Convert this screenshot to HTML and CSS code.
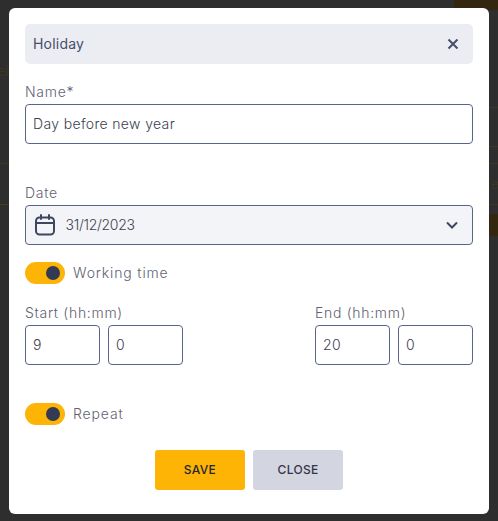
FILE: index.html
```html
<!DOCTYPE html>
<html lang="en">
<head>
<meta charset="utf-8">
<title>Holiday</title>
<link rel="stylesheet" href="styles.css">
</head>
<body>
<div class="backdrop" aria-hidden="true">
  <span class="bg-block bg-block-top"></span>
  <span class="bg-block bg-block-right"></span>
  <span class="bg-line bg-line-r1"></span>
  <span class="bg-line bg-line-r2"></span>
  <span class="bg-line bg-line-r3"></span>
  <span class="bg-line bg-line-r4"></span>
  <span class="bg-line bg-line-l1"></span>
  <span class="bg-line bg-line-l2"></span>
  <span class="bg-text bg-text-l">ek</span>
  <span class="bg-text bg-text-r">e</span>
</div>
<main class="modal">
  <header class="modal-head">
    <span>Holiday</span>
    <svg class="icon-close" width="12" height="12" viewBox="0 0 12 12"><path d="M1.5 1.5l9 9M10.5 1.5l-9 9" fill="none" stroke="#474e6b" stroke-width="2"/></svg>
  </header>
  <div class="field field-name">
    <label class="label">Name*</label>
    <div class="input">Day before new year</div>
  </div>
  <div class="field field-date">
    <label class="label">Date</label>
    <div class="input select">
      <svg class="icon-cal" width="22" height="22" viewBox="0 0 22 22"><g fill="none" stroke="#3f4660" stroke-width="2" stroke-linecap="round"><rect x="2" y="3.5" width="18" height="17" rx="3.5"/><path d="M2 9h18M7 1v4M15 1v4"/></g></svg>
      <span class="select-value">31/12/2023</span>
      <svg class="icon-chev" width="12" height="8" viewBox="0 0 12 8"><path d="M1 1.5l5 5 5-5" fill="none" stroke="#3f4660" stroke-width="2"/></svg>
    </div>
  </div>
  <div class="toggle-row toggle-work">
    <span class="toggle"><span class="knob"></span></span>
    <span class="toggle-label">Working time</span>
  </div>
  <div class="times">
    <div class="time">
      <label class="label">Start (hh:mm)</label>
      <div class="time-inputs">
        <div class="input small">9</div>
        <div class="input small">0</div>
      </div>
    </div>
    <div class="time">
      <label class="label">End (hh:mm)</label>
      <div class="time-inputs">
        <div class="input small">20</div>
        <div class="input small">0</div>
      </div>
    </div>
  </div>
  <div class="toggle-row toggle-repeat">
    <span class="toggle"><span class="knob"></span></span>
    <span class="toggle-label">Repeat</span>
  </div>
  <div class="actions">
    <button class="btn btn-save">SAVE</button>
    <button class="btn btn-close">CLOSE</button>
  </div>
</main>
</body>
</html>
```
FILE: styles.css
```css
* { box-sizing: border-box; }
html, body { margin: 0; height: 521px; overflow: hidden; }
body {
  position: relative;
  background: #2e2e2e;
  font-family: Inter, "Noto Sans", "Liberation Sans", sans-serif;
  font-size: 14px;
  font-weight: 300;
  color: #474a5c;
}
.backdrop { position: absolute; inset: 0; }
.bg-block { position: absolute; background: #33280f; }
.bg-block-top { left: 454px; top: 0; width: 44px; height: 10px; }
.bg-block-right { left: 489px; top: 214px; width: 9px; height: 22px; }
.bg-line { position: absolute; height: 1px; background: #42361d; }
.bg-line-r1 { left: 489px; right: 0; top: 107px; }
.bg-line-r2 { left: 489px; right: 0; top: 146px; }
.bg-line-r3 { left: 489px; right: 0; top: 163px; }
.bg-line-r4 { left: 489px; right: 0; top: 204px; }
.bg-line-l1 { left: 0; width: 9px; top: 163px; }
.bg-line-l2 { left: 0; width: 9px; top: 204px; background: #4a3a18; }
.bg-text { position: absolute; font-size: 14px; color: #42361d; }
.bg-text-l { left: -3px; top: 62px; }
.bg-text-r { left: 491px; top: 175px; }

.modal {
  position: absolute;
  left: 9px;
  top: 8px;
  width: 480px;
  height: 506px;
  padding: 16px;
  background: #fff;
  border-radius: 6px;
}
.modal-head {
  display: flex;
  align-items: center;
  justify-content: space-between;
  height: 40px;
  padding: 0 14px 0 8px;
  background: #ecedf2;
  border-radius: 5px;
  letter-spacing: 0.2px;
  font-weight: 400;
  color: #474e6b;
}
.modal-head span { padding-bottom: 1px; }
.field-name { margin-top: 19px; }
.field-date { margin-top: 40px; }
.label {
  display: block;
  height: 17px;
  line-height: 17px;
  margin-bottom: 4px;
  font-size: 14px;
  letter-spacing: 0.7px;
  color: #5f6273;
}
.input {
  display: flex;
  align-items: center;
  height: 40px;
  padding: 0 7px 1px;
  background: #fff;
  border: 1px solid #59648a;
  border-radius: 4px;
  letter-spacing: 0.35px;
  color: #3c3f50;
}
.select { padding: 0 14px 0 8px; background: #f3f4f7; }
.select-value { margin-left: 9.5px; padding-bottom: 1px; letter-spacing: -0.3px; }
.icon-chev { margin-left: auto; }
.toggle-row { display: flex; align-items: center; gap: 8px; height: 22px; }
.toggle-work { margin-top: 17px; }
.toggle-repeat { margin-top: 38px; }
.toggle {
  display: flex;
  align-items: center;
  justify-content: flex-end;
  width: 40px;
  height: 22px;
  padding-right: 5px;
  background: #fdb404;
  border-radius: 11px;
}
.knob { width: 14px; height: 14px; border-radius: 50%; background: #333a53; }
.toggle-label { padding-bottom: 1px; letter-spacing: 0.85px; color: #5f6273; }
.times { display: flex; justify-content: space-between; margin-top: 20px; }
.time-inputs { display: flex; gap: 8px; }
.small { width: 75px; }
.actions { display: flex; justify-content: center; gap: 8px; margin-top: 25px; }
.btn {
  width: 90px;
  height: 40px;
  padding: 0 0 2px;
  border: 0;
  border-radius: 3px;
  font: 500 12px Inter, "Noto Sans", sans-serif;
  letter-spacing: 0.3px;
  color: #24262f;
}
.btn-save { background: #fdb404; }
.btn-close { background: #d3d5e0; color: #33364a; }
```
